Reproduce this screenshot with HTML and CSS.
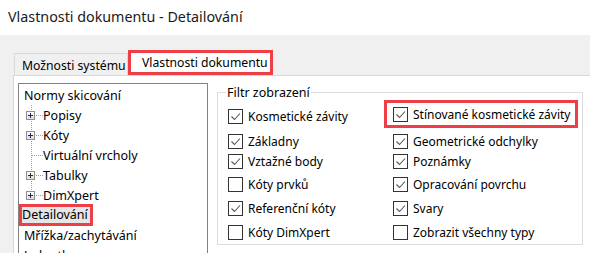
FILE: index.html
```html
<!DOCTYPE html>
<html lang="cs">
<head>
    <meta charset="UTF-8">
    <title>Vlastnosti dokumentu - Detailování</title>
    <link rel="stylesheet" href="styles.css">
</head>
<body>
    <div class="title">Vlastnosti dokumentu - Detailování</div>

    <div class="dialog">
        <div class="tabs">
            <div class="tab">Možnosti systému</div>
            <div class="tab active">Vlastnosti dokumentu</div>
        </div>

        <div class="panel">
            <div class="tree">
                <div class="node root">Normy skicování</div>
                <div class="node child"><span class="line"><span class="plus"></span></span>Popisy</div>
                <div class="node child"><span class="line"><span class="plus"></span></span>Kóty</div>
                <div class="node child"><span class="line"></span>Virtuální vrcholy</div>
                <div class="node child"><span class="line"><span class="plus"></span></span>Tabulky</div>
                <div class="node child last"><span class="line"><span class="plus"></span></span>DimXpert</div>
                <div class="node root"><span class="selected">Detailování</span></div>
                <div class="node root">Mřížka/zachytávání</div>
                <div class="node root">Jednotky</div>
            </div>

            <fieldset class="group">
                <legend>Filtr zobrazení</legend>
                <div class="checks">
                    <label class="check on">Kosmetické závity</label>
                    <label class="check on marked">Stínované kosmetické závity</label>
                    <label class="check on">Základny</label>
                    <label class="check on">Geometrické odchylky</label>
                    <label class="check on">Vztažné body</label>
                    <label class="check on">Poznámky</label>
                    <label class="check">Kóty prvků</label>
                    <label class="check on">Opracování povrchu</label>
                    <label class="check on">Referenční kóty</label>
                    <label class="check on">Svary</label>
                    <label class="check">Kóty DimXpert</label>
                    <label class="check">Zobrazit všechny typy</label>
                </div>
            </fieldset>
        </div>
    </div>
</body>
</html>
```

FILE: styles.css
```css
html, body {
    margin: 0;
    padding: 0;
    height: 253px;
    overflow: hidden;
}

body {
    font-family: "Noto Sans", "DejaVu Sans", sans-serif;
    font-size: 12.5px;
    color: #000;
    background: #f0f0f0;
}

.title {
    height: 35px;
    line-height: 34px;
    padding-left: 8px;
    font-size: 14.3px;
    color: #1a1a1a;
    background: #fff;
}

.dialog {
    padding: 15px 0 0 13px;
}

/* tabs */
.tabs {
    display: flex;
    align-items: flex-end;
    height: 25px;
    font-size: 12.2px;
}

.tab {
    box-sizing: border-box;
    height: 22px;
    line-height: 24px;
    padding: 0 0 0 7px;
    width: 114px;
    margin-left: 1px;
    white-space: nowrap;
    border: 1px solid #d9d9d9;
    border-bottom: none;
    background: #f0f0f0;
}

.tab.active {
    height: 25px;
    line-height: 19px;
    width: 145px;
    margin-left: 0;
    padding: 0 0 0 11px;
    background: #fff;
    border: 3px solid #ee3f46;
}

/* white page */
.panel {
    display: flex;
    align-items: flex-start;
    height: 200px;
    padding: 7px 0 0 4px;
    background: #fff;
    border-top: 1px solid #d9d9d9;
    border-left: 1px solid #d9d9d9;
}

/* tree */
.tree {
    width: 183px;
    height: 190px;
    padding: 1px 0 0 5px;
    border: 1px solid #828282;
}

.node {
    display: flex;
    align-items: center;
    height: 20px;
    white-space: nowrap;
}

.line {
    display: flex;
    align-items: center;
    width: 19px;
    height: 20px;
    flex-shrink: 0;
    background:
        repeating-linear-gradient(to bottom, #a0a0a0 0 1px, transparent 1px 2px) 7px 0 / 1px 100% no-repeat,
        repeating-linear-gradient(to right, #a0a0a0 0 1px, transparent 1px 2px) 8px 10px / 11px 1px no-repeat;
}

.last .line {
    background:
        repeating-linear-gradient(to bottom, #a0a0a0 0 1px, transparent 1px 2px) 7px 0 / 1px 10px no-repeat,
        repeating-linear-gradient(to right, #a0a0a0 0 1px, transparent 1px 2px) 8px 10px / 11px 1px no-repeat;
}

.plus {
    position: relative;
    width: 9px;
    height: 9px;
    margin-left: 2px;
    box-sizing: border-box;
    border: 1px solid #8e8f8f;
    background: linear-gradient(#fcfcfc, #dcdcdc);
}

.plus::before,
.plus::after {
    content: "";
    position: absolute;
    background: #22275a;
}

.plus::before {
    left: 1px;
    top: 3px;
    width: 5px;
    height: 1px;
}

.plus::after {
    left: 3px;
    top: 1px;
    width: 1px;
    height: 5px;
}

.selected {
    margin-left: -2px;
    padding: 0 2px 0 0;
    line-height: 16px;
    background: #e6e6e6;
    outline: 3px solid #ee3f46;
}

/* filter group */
.group {
    box-sizing: border-box;
    width: 366px;
    height: 161px;
    margin: 1px 0 0 9px;
    padding: 0 0 0 10px;
    border: 1px solid #dcdcdc;
}

.group legend {
    padding: 0 1px;
    margin-left: -2px;
}

.checks {
    display: grid;
    grid-template-columns: 165px auto;
    grid-template-rows: 25px 20px 23px 24px 24px 22px;
    align-items: start;
    margin-top: 5px;
    font-size: 12px;
}

.check {
    display: flex;
    align-items: center;
    gap: 5px;
    height: 20px;
    white-space: nowrap;
}

.check::before {
    content: "";
    width: 13px;
    height: 13px;
    flex-shrink: 0;
    border: 1px solid #333;
    background: #fff;
}

.check.on::before {
    background: #fff url("data:image/svg+xml;utf8,<svg xmlns='http://www.w3.org/2000/svg' width='13' height='13'><path d='M2.5 6.5 L5.5 9.5 L11 3.5' fill='none' stroke='%23555' stroke-width='1.1'/></svg>") no-repeat;
}

.check.marked {
    justify-self: start;
    height: 22px;
    margin: -6px 0 0 -9px;
    padding: 0 4px 0 6px;
    border: 3px solid #ee3f46;
}
```
